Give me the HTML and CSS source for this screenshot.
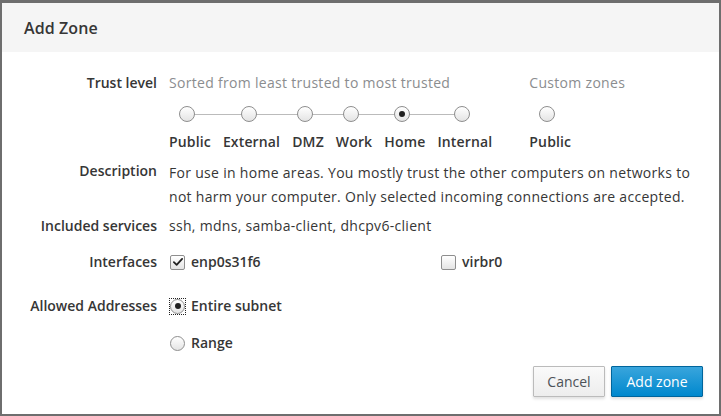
FILE: index.html
```html
<!DOCTYPE html>
<html>
<head>
<meta charset="utf-8">
<link rel="stylesheet" href="styles.css">
</head>
<body>
<div class="modal">
  <div class="modal-header">
    <h4 class="title">Add Zone</h4>
  </div>
  <div class="modal-body">
    <div class="row row-trust">
      <div class="label">Trust level</div>
      <div class="trust">
        <div class="group">
          <div class="hint">Sorted from least trusted to most trusted</div>
          <div class="steps">
            <span class="track"></span>
            <div class="step"><span class="radio"></span><span class="step-label">Public</span></div>
            <div class="step"><span class="radio"></span><span class="step-label">External</span></div>
            <div class="step"><span class="radio"></span><span class="step-label">DMZ</span></div>
            <div class="step"><span class="radio"></span><span class="step-label">Work</span></div>
            <div class="step"><span class="radio checked"></span><span class="step-label">Home</span></div>
            <div class="step"><span class="radio"></span><span class="step-label">Internal</span></div>
          </div>
        </div>
        <div class="group custom">
          <div class="hint">Custom zones</div>
          <div class="steps">
            <div class="step"><span class="radio"></span><span class="step-label">Public</span></div>
          </div>
        </div>
      </div>
    </div>
    <div class="row row-desc">
      <div class="label">Description</div>
      <div class="value desc">For use in home areas. You mostly trust the other computers on networks to not harm your computer. Only selected incoming connections are accepted.</div>
    </div>
    <div class="row row-services">
      <div class="label">Included services</div>
      <div class="value">ssh, mdns, samba-client, dhcpv6-client</div>
    </div>
    <div class="row row-ifaces">
      <div class="label">Interfaces</div>
      <div class="value ifaces">
        <label class="check"><span class="box checked"><svg viewBox="0 0 16 16" width="12" height="12"><path d="M2.5 8.2 L6.2 11.8 L13.5 3.8" fill="none" stroke="#222" stroke-width="2.4" stroke-linecap="round" stroke-linejoin="round"/></svg></span><span class="check-label">enp0s31f6</span></label>
        <label class="check"><span class="box"></span><span class="check-label">virbr0</span></label>
      </div>
    </div>
    <div class="row row-addr">
      <div class="label">Allowed Addresses</div>
      <div class="value addr">
        <label class="opt"><span class="focus-ring"><span class="radio small checked"></span></span><span class="opt-label">Entire subnet</span></label>
        <label class="opt opt-range"><span class="focus-ring plain"><span class="radio small"></span></span><span class="opt-label">Range</span></label>
      </div>
    </div>
  </div>
  <div class="modal-footer">
    <button class="btn btn-default">Cancel</button>
    <button class="btn btn-primary">Add zone</button>
  </div>
</div>
</body>
</html>
```
FILE: styles.css
```css
html, body {
  margin: 0;
  padding: 0;
  background: #ffffff;
}
body {
  font-family: "Open Sans", "Noto Sans", sans-serif;
  font-size: 14px;
  color: #363636;
}
.modal {
  width: 721px;
  height: 416px;
  box-sizing: border-box;
  border-style: solid;
  border-color: #6e6e6e;
  border-width: 3px 2px 2px 2px;
  display: flex;
  flex-direction: column;
  background: #fff;
}
.modal-header {
  background: #f5f5f5;
  height: 49px;
  display: flex;
  align-items: center;
  padding-left: 22px;
  flex: none;
}
.title {
  margin: 0;
  font-size: 16px;
  font-weight: 600;
  color: #363636;
  line-height: 20px;
  letter-spacing: 0.1px;
}
.modal-body {
  padding: 21px 18px 0 18px;
  flex: 1;
}
.row {
  display: flex;
  align-items: flex-start;
}
.label {
  width: 137px;
  flex: none;
  text-align: right;
  font-weight: 600;
  line-height: 20px;
  margin-right: 12px;
  color: #363636;
}
.value {
  line-height: 20px;
  letter-spacing: 0.3px;
}
.trust {
  display: flex;
  gap: 37px;
}
.hint {
  color: #8b8d8f;
  line-height: 20px;
  letter-spacing: 0.3px;
}
.steps {
  position: relative;
  display: flex;
  gap: 12px;
  margin-top: 13px;
}
.track {
  position: absolute;
  top: 8px;
  left: 18px;
  right: 29px;
  height: 1px;
  background: #bbbbbb;
}
.step {
  position: relative;
  display: flex;
  flex-direction: column;
  align-items: center;
}
.step .radio {
  margin-right: 6px;
}
.step-label {
  font-weight: 600;
  line-height: 20px;
  margin-top: 10px;
  letter-spacing: 0.15px;
}
.radio {
  display: block;
  width: 16px;
  height: 16px;
  box-sizing: border-box;
  border-radius: 50%;
  border: 1px solid #8e8e8e;
  background: linear-gradient(#ffffff, #e4e4e4);
  position: relative;
  flex: none;
}
.radio.checked::after {
  content: "";
  position: absolute;
  left: 4px;
  top: 4px;
  width: 6px;
  height: 6px;
  border-radius: 50%;
  background: #1f1f1f;
}
.row-desc {
  margin-top: 9px;
}
.desc {
  line-height: 24px;
}
.row-services {
  margin-top: 7px;
}
.row-ifaces {
  margin-top: 16px;
}
.ifaces {
  display: grid;
  grid-template-columns: 271px auto;
  letter-spacing: 0;
}
.check, .opt {
  display: flex;
  align-items: center;
  font-weight: 600;
}
.box {
  width: 15px;
  height: 15px;
  box-sizing: border-box;
  border: 1px solid #8e8e8e;
  border-radius: 2px;
  background: linear-gradient(#ffffff, #e4e4e4);
  display: flex;
  align-items: center;
  justify-content: center;
  margin-left: 1px;
  margin-right: 6px;
}
.row-addr {
  margin-top: 24px;
}
.addr {
  display: flex;
  flex-direction: column;
  gap: 17px;
  letter-spacing: 0;
}
.focus-ring {
  display: block;
  padding: 0;
  margin-left: 1px;
  margin-right: 6px;
  outline: 1px dotted #222;
  outline-offset: 0;
}
.focus-ring.plain {
  outline: none;
}
.radio.small {
  width: 15px;
  height: 15px;
}
.radio.small.checked::after {
  left: 3.5px;
  top: 3.5px;
  width: 6px;
  height: 6px;
}
.modal-footer {
  display: flex;
  justify-content: flex-end;
  gap: 6px;
  padding: 0 16px 17px 0;
}
.btn {
  font-family: "Open Sans", "Noto Sans", sans-serif;
  font-size: 14px;
  height: 31px;
  padding: 0 12px;
  border-radius: 1px;
  box-shadow: 0 2px 3px rgba(0,0,0,0.12);
}
.btn-default {
  background: linear-gradient(#fafafa, #ededed);
  border: 1px solid #bbbbbb;
  color: #4d5258;
  width: 72px;
}
.btn-primary {
  background: linear-gradient(#39a5dc, #0088ce);
  border: 1px solid #00659c;
  color: #ffffff;
  width: 92px;
}
```
